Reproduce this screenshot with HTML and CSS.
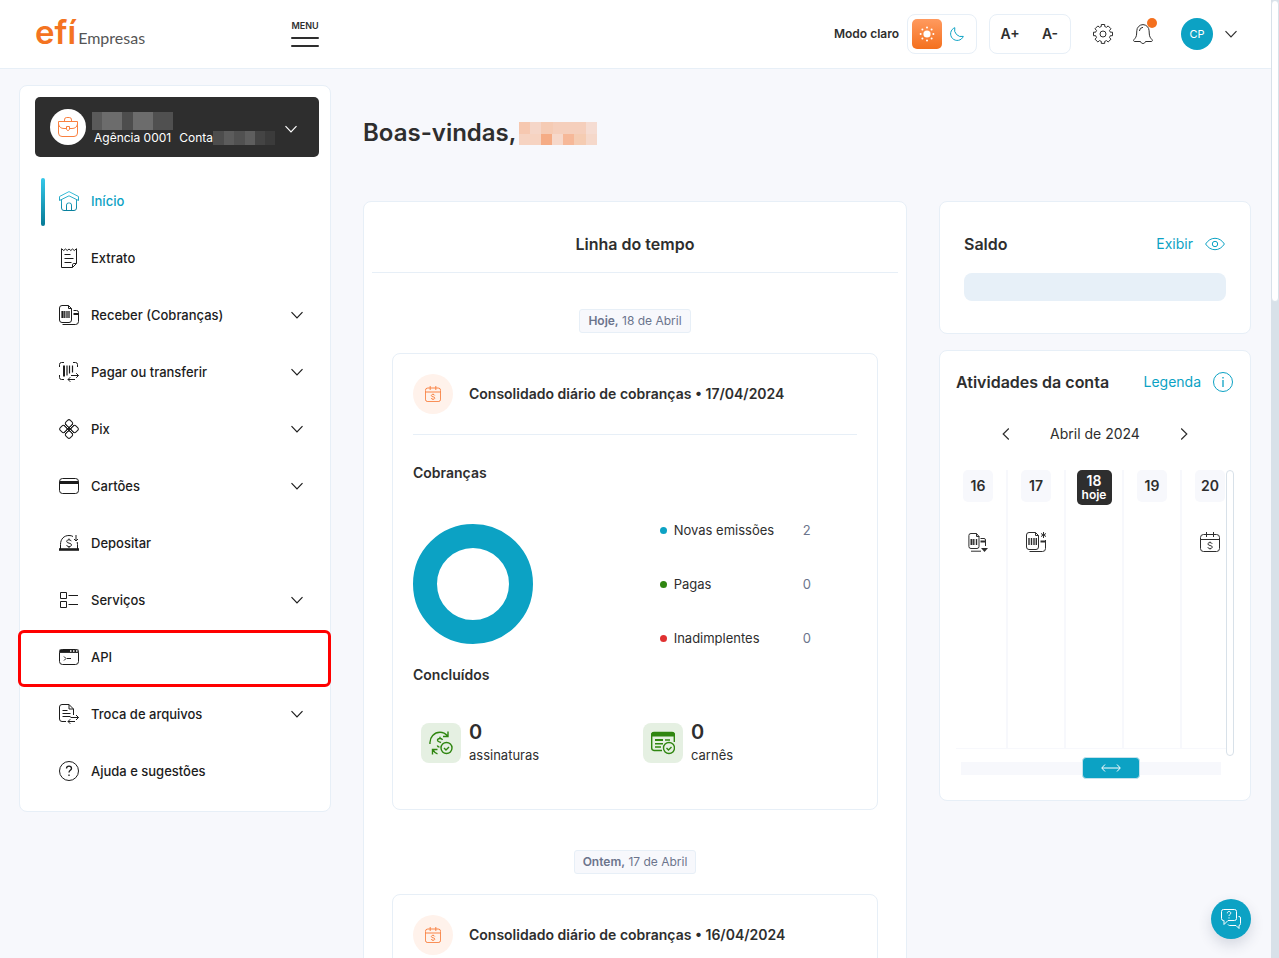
FILE: index.html
```html
<!DOCTYPE html>
<html lang="pt-BR">
<head>
<meta charset="utf-8">
<meta name="viewport" content="width=device-width, initial-scale=1">
<title>Efí Empresas</title>
<link rel="stylesheet" href="styles.css">
</head>
<body>
<svg class="defs" aria-hidden="true">
  <defs>
    <linearGradient id="teal" x1="0" y1="0" x2="0" y2="20" gradientUnits="userSpaceOnUse"><stop offset="0" stop-color="#3cc4e0"/><stop offset="1" stop-color="#077f9c"/></linearGradient>
    <symbol id="chev" viewBox="0 0 12 12"><path d="M.5 3.200L6 8.800l5.500-5.600"/></symbol>
    <symbol id="calendar" viewBox="0 0 20 20"><rect x=".5" y="2.500" width="19" height="17" rx="3"/><path d="M.5 7.500h19M6.500 0v5M13.500 0v5M12.200 11.800c-.3-.8-1.100-1.200-2.200-1.200-1.200 0-2.100.5-2.100 1.400 0 2 4.400 1 4.400 3 0 .9-.9 1.500-2.200 1.500-1.200 0-2.200-.5-2.400-1.400M10 9.600v1M10 16.500v1"/></symbol>
  </defs>
</svg>
<div class="app">
  <div class="page">
    <header class="topbar">
      <a class="logo" href="#"><span class="logo-name">efí</span><span class="logo-sub">Empresas</span></a>
      <button class="menu" type="button"><span>MENU</span><i></i><i></i></button>
      <div class="tools">
        <span class="mode-label">Modo claro</span>
        <div class="toggle">
          <button class="mode sun" type="button" aria-label="Modo claro">
            <svg width="16" height="16" viewBox="0 0 16 16"><circle cx="8" cy="8" r="3.600" fill="#fff"/><g fill="#fff"><circle cx="8" cy="1.600" r="1"/><circle cx="8" cy="14.400" r="1"/><circle cx="1.600" cy="8" r="1"/><circle cx="14.400" cy="8" r="1"/><circle cx="3.400" cy="3.400" r="1"/><circle cx="12.600" cy="12.600" r="1"/><circle cx="3.400" cy="12.600" r="1"/><circle cx="12.600" cy="3.400" r="1"/></g></svg>
          </button>
          <button class="mode" type="button" aria-label="Modo escuro">
            <svg width="14" height="14" viewBox="0 0 14 14" fill="none" stroke="#0ca2c4"><path d="M4.800.7A6.600 6.600 0 1 0 13.300 9.400 7 7 0 0 1 4.800.7z"/></svg>
          </button>
        </div>
        <div class="toggle zoom">
          <button class="size" type="button">A+</button>
          <button class="size" type="button">A-</button>
        </div>
        <button class="icon-btn gear" type="button" aria-label="Configurações">
          <svg class="ic" viewBox="0 0 20 20"><circle cx="10" cy="10" r="3"/><path d="M8.300.5h3.400v2l1.900.8 1.500-1.400 2.900 2.900-1.500 1.600.8 1.800h2.200v3.500h-2.200l-.8 1.900 1.500 1.600-2.900 2.800-1.500-1.400-1.900.8v2H8.300v-2l-1.900-.8L4.900 18 2 15.200l1.500-1.600-.8-1.900H.5V8.200h2.200l.8-1.800L2 4.800l2.900-2.900 1.500 1.400 1.900-.8z" stroke-linejoin="round"/></svg>
        </button>
        <button class="icon-btn bell" type="button" aria-label="Notificações">
          <svg class="ic" viewBox="0 0 20 20"><path d="M7.500 17.500c.4 1.200 1.200 2 2.500 2s2.100-.8 2.500-2h5.800c1 0 1.500-1 .8-1.800-1.700-1.800-2.600-3-2.800-5.700l-.2-3.200A6.300 6.300 0 0 0 10 .6a6.300 6.300 0 0 0-6.200 6.200L3.600 10c-.2 2.700-1 3.900-2.700 5.700-.8.800-.3 1.800.8 1.800zM6.400 7A4 4 0 0 1 10 3.300"/></svg>
          <i class="dot-new"></i>
        </button>
        <button class="profile" type="button"><span class="initials">CP</span><svg class="ic chev"><use href="#chev"/></svg></button>
      </div>
    </header>
    <div class="layout">
      <aside class="card sidebar">
        <button class="account" type="button">
          <span class="account-pic"><svg width="20" height="20" viewBox="0 0 20 20" fill="none" stroke="#f98040"><path d="M.5 4.500h19V16a3.500 3.500 0 0 1-3.500 3.500H4A3.500 3.500 0 0 1 .5 16zM6.500 4.500V3a2.300 2.300 0 0 1 2.300-2.500h2.400A2.300 2.300 0 0 1 13.500 3v1.500M.5 7c.5 3 2.500 4.500 5.500 4.500h2.500M19.500 7c-.5 3-2.500 4.500-5.500 4.500h-2.500"/><path d="M8.500 9.500h3v3L10 13.700l-1.500-1.200z"/></svg></span>
          <span class="account-info"><span class="mask mask-name"></span><span class="account-line"><span>Agência 0001</span><span>Conta<span class="mask mask-num"></span></span></span></span>
          <svg class="ic chev"><use href="#chev"/></svg>
        </button>
        <nav class="nav">
          <a class="item active" href="#"><svg class="ic" viewBox="0 0 20 20"><g stroke="url(#teal)"><path d="M.5 5.500L10 .6l9.500 4.900v4L10 4.800.5 9.500z" stroke-linejoin="round"/><path d="M2.500 9v8a2.500 2.500 0 0 0 2.500 2.500h10a2.500 2.500 0 0 0 2.500-2.500V9M7.500 19v-5a2 2 0 0 1 2-2h1a2 2 0 0 1 2 2v5"/></g></svg><span>Início</span></a>
          <a class="item" href="#"><svg class="ic" viewBox="0 0 20 20"><path d="M2.500.7v18.800h11l4-4V.7l-2.200 1.800L13.500 1l-1.700 1.500L10 1 8.200 2.500 6.500 1 4.700 2.500zM13.500 19.300v-2.500c0-.8.500-1.300 1.300-1.300h2.500M5.500 6.500h6M5.500 10.500h9M5.500 14.500h7"/></svg><span>Extrato</span></a>
          <a class="item" href="#"><svg class="ic" viewBox="0 0 20 20"><path d="M9.500.5H3A2.500 2.500 0 0 0 .5 3v12A2.500 2.500 0 0 0 3 17.500h7a2.500 2.500 0 0 0 2.500-2.500V3.500zM9.500.5v3h3M14.500 5.500h3a2 2 0 0 1 2 2v9a3 3 0 0 1-3 3H3.500"/><path d="M14.500 9h5.500M3.500 6v7" stroke-width="2.200"/><path d="M5.800 6v7M8 6v7M10 6v7" stroke-width="1.300"/></svg><span>Receber (Cobranças)</span><svg class="ic chev"><use href="#chev"/></svg></a>
          <a class="item" href="#"><svg class="ic" viewBox="0 0 20 20"><path d="M.5 5V2.500a2 2 0 0 1 2-2H5M14 .5h2.500a2 2 0 0 1 2 2V5M.5 13v2.500a2 2 0 0 0 2 2H5"/><path d="M5 3.500v11" stroke-width="2"/><path d="M8 3.500v10M10.500 3.500v8M13.500 3.500v7" stroke-width="1.200"/><path d="M12 13.500h7.500m-2.300-2.300l2.300 2.300-2.300 2.300M16 17.500H9m2.300-2.300L9 17.500l2.300 2.300"/></svg><span>Pagar ou transferir</span><svg class="ic chev"><use href="#chev"/></svg></a>
          <a class="item" href="#"><svg class="ic" viewBox="0 0 20 20"><rect x="6.900" y="1.200" width="6.200" height="6.200" rx="2" transform="rotate(45 10 4.300)"/><rect x="12.600" y="6.900" width="6.200" height="6.200" rx="2" transform="rotate(45 15.700 10)"/><rect x="6.900" y="12.600" width="6.200" height="6.200" rx="2" transform="rotate(45 10 15.700)"/><rect x="1.200" y="6.900" width="6.200" height="6.200" rx="2" transform="rotate(45 4.300 10)"/><path d="M6 5l9 9M5 6l9 9M14 5l-9 9M15 6l-9 9"/></svg><span>Pix</span><svg class="ic chev"><use href="#chev"/></svg></a>
          <a class="item" href="#"><svg class="ic" viewBox="0 0 20 20"><rect x=".5" y="2.500" width="19" height="15" rx="3"/><path d="M.5 6.500h19" stroke-width="3"/></svg><span>Cartões</span><svg class="ic chev"><use href="#chev"/></svg></a>
          <a class="item" href="#"><svg class="ic" viewBox="0 0 20 20"><path d="M1.500 16V11.500C1.500 6 5 2.500 10 2.500c1.600 0 3 .3 4 1M18.500 16v-4.500c0-.9-.1-1.700-.3-2.500M17 2v6m-2-2l2 2 2-2M12.300 8.200c-.3-.9-1.200-1.400-2.300-1.400-1.300 0-2.300.6-2.300 1.600 0 2.300 4.800 1.200 4.800 3.500 0 1-1 1.700-2.400 1.700-1.300 0-2.300-.6-2.500-1.600M10 5.500v1.300M10 13.600V15"/><path d="M0 16.500h20" stroke-width="2.600"/></svg><span>Depositar</span></a>
          <a class="item" href="#"><svg class="ic" viewBox="0 0 20 20"><path d="M1.500 2.500h6v6h-6zM1.500 11.500h6v6h-6zM9.500 5.500H19M9.500 14.500H19"/></svg><span>Serviços</span><svg class="ic chev"><use href="#chev"/></svg></a>
          <a class="item marked" href="#"><svg class="ic" viewBox="0 0 20 20"><rect x=".5" y="2.500" width="19" height="15" rx="3"/><path d="M.5 4.200h19" stroke-width="3.400"/><path d="M11 4h1.500M14 4h1.500M17 4h1.500" stroke="#fff" stroke-width="1.500"/><path d="M5 9.500l2 2-2 2M8 11.500h4"/></svg><span>API</span></a>
          <a class="item" href="#"><svg class="ic" viewBox="0 0 20 20"><path d="M10 .5H3A2.500 2.500 0 0 0 .5 3v12A2.500 2.500 0 0 0 3 17.500h4M10 .5l4.500 4.500v6M10 .5V5h4.500M3.500 6.500h5M3.500 9.500h8M3.500 12.500h8M11.500 13.500h8m-2.500-2.500l2.500 2.500-2.500 2.500M16 17.500H9m2.300-2.300L9 17.500l2.300 2.300"/></svg><span>Troca de arquivos</span><svg class="ic chev"><use href="#chev"/></svg></a>
          <a class="item" href="#"><svg class="ic" viewBox="0 0 20 20"><circle cx="10" cy="10" r="9.500"/><path d="M7.500 7.500c0-1.400 1-2.300 2.500-2.300s2.500.9 2.500 2.200c0 1.800-2.500 1.900-2.500 4M10 13.500V15" stroke-width="1.300"/></svg><span>Ajuda e sugestões</span></a>
        </nav>
      </aside>
      <main class="content">
        <h1 class="welcome">Boas-vindas,<span class="mask mask-user"></span></h1>
        <div class="columns">
          <section class="card timeline">
            <h2 class="timeline-title">Linha do tempo</h2>
            <div class="feed">
              <div class="entry">
                <p class="pill"><b>Hoje,</b> 18 de Abril</p>
                <article class="card event">
                  <div class="event-head"><span class="event-icon"><svg width="16" height="16"><use href="#calendar"/></svg></span><h3>Consolidado diário de cobranças • 17/04/2024</h3></div>
                  <h4 class="charges">Cobranças</h4>
                  <div class="chart">
                    <svg class="donut" viewBox="0 0 120 120"><circle cx="60" cy="60" r="48" fill="none" stroke="#0ca2c4" stroke-width="24"/></svg>
                    <dl class="legend">
                      <div><dt class="blue">Novas emissões</dt><dd>2</dd></div>
                      <div><dt class="green">Pagas</dt><dd>0</dd></div>
                      <div><dt class="red">Inadimplentes</dt><dd>0</dd></div>
                    </dl>
                  </div>
                  <h4 class="done">Concluídos</h4>
                  <div class="stats">
                    <div class="stat"><span class="stat-icon"><svg width="24" height="24" viewBox="0 0 24 24"><path d="M1 13C.3 6 5.500 1.300 11 1.300c3 0 5.500 1.300 7.500 3.700M19 .5V5.500h-5M8.500 22.800c-2-.6-3.500-1.800-4.500-4M3.500 23.500v-5h5M13.500 9c-.3-1-1.300-1.500-2.500-1.500-1.400 0-2.500.7-2.500 1.800C8.500 11 11 11 12 11.500M8.300 14.500c.3 1 1.200 1.500 2.200 1.600M11 5.800v1.700"/><circle cx="17.500" cy="17" r="5.500"/><path d="M15 17l2 2 3-3"/></svg></span><span class="stat-text"><strong>0</strong><span>assinaturas</span></span></div>
                    <div class="stat"><span class="stat-icon"><svg width="24" height="24" viewBox="0 0 24 24"><path d="M11 19.500H3A2.500 2.500 0 0 1 .7 17V4A2.500 2.500 0 0 1 3 1.500h18A2.500 2.500 0 0 1 23.300 4v7"/><path d="M0 5.500V4a3 3 0 0 1 3-3h18a3 3 0 0 1 3 3v1.500z" fill="#2f8610" stroke="none"/><path d="M4 9h8" stroke-width="2"/><path d="M14 9h5M4 12.800h8M4 16h6"/><circle cx="18" cy="17" r="5.500"/><path d="M15.500 17l2 2 3-3"/></svg></span><span class="stat-text"><strong>0</strong><span>carnês</span></span></div>
                  </div>
                </article>
              </div>
              <div class="entry">
                <p class="pill"><b>Ontem,</b> 17 de Abril</p>
                <article class="card event">
                  <div class="event-head"><span class="event-icon"><svg width="16" height="16"><use href="#calendar"/></svg></span><h3>Consolidado diário de cobranças • 16/04/2024</h3></div>
                </article>
              </div>
            </div>
          </section>
          <div class="side">
            <section class="card balance">
              <div class="side-head"><h2>Saldo</h2><button class="link" type="button">Exibir<svg width="20" height="20" viewBox="0 0 20 20"><path d="M.6 10C3 6.300 6.200 4.300 10 4.300s7 2 9.400 5.700c-2.400 3.700-5.600 5.700-9.400 5.700S3 13.700.6 10z"/><circle cx="10" cy="10" r="2.700"/></svg></button></div>
              <div class="balance-bar"></div>
            </section>
            <section class="card activity">
              <div class="side-head"><h2>Atividades da conta</h2><button class="link" type="button">Legenda<svg width="20" height="20" viewBox="0 0 20 20"><circle cx="10" cy="10" r="9.500"/><path d="M10 8v7M10 5v1.500" stroke-width="1.300"/></svg></button></div>
              <div class="month"><button class="icon-btn" type="button" aria-label="Mês anterior"><svg class="ic prev" width="12" height="12"><use href="#chev"/></svg></button><span>Abril de 2024</span><button class="icon-btn" type="button" aria-label="Próximo mês"><svg class="ic next" width="12" height="12"><use href="#chev"/></svg></button></div>
              <div class="calendar">
                <div class="view">
                  <ol class="days">
                    <li><span class="day">16</span><svg class="ic" viewBox="0 0 20 20"><path d="M8.500 1.500H3A2 2 0 0 0 .9 3.500v11A2 2 0 0 0 3 16.500h6a2 2 0 0 0 2-2V4.500zM8.500 1.500v3h2.800M12.500 6.500h3.500a1.500 1.500 0 0 1 1.500 1.500v6M3 19.200h10"/><path d="M12.500 9.500h5M3.500 7v6" stroke-width="2"/><path d="M5.800 7v6M8.500 7v6" stroke-width="1.400"/><path d="M13 16h7l-3.500 4z" fill="#2e2e2e" stroke="none"/></svg></li>
                    <li><span class="day">17</span><svg class="ic" viewBox="0 0 20 20"><path d="M9.500.5H3A2.500 2.500 0 0 0 .5 3v12A2.500 2.500 0 0 0 3 17.500h7a2.500 2.500 0 0 0 2.500-2.500V3.500zM9.500.5v3h3M19.500 8v8.500a3 3 0 0 1-3 3H3.500M17.500 0v6M15 1.500l5 3M20 1.500l-5 3"/><path d="M14.500 9.500h5.500" stroke-width="2"/><path d="M3 6v7M5.500 6v7M8 6v7M10.300 6v7" stroke-width="1.400"/></svg></li>
                    <li><span class="day today">18<small>hoje</small></span></li>
                    <li><span class="day">19</span></li>
                    <li><span class="day">20</span><svg class="ic"><use href="#calendar"/></svg></li>
                  </ol>
                </div>
                <div class="rail"></div>
              </div>
              <input class="range" type="range" min="0" max="100" value="60" aria-label="Dias do mês">
            </section>
          </div>
        </div>
      </main>
    </div>
  </div>
  <div class="scroll"><div class="scroll-thumb"></div></div>
</div>
<button class="chat" type="button" aria-label="Ajuda"><svg width="20" height="20" viewBox="0 0 20 20"><path d="M2.500.5h11a2 2 0 0 1 2 2v7a2 2 0 0 1-2 2H7l-4 4v-4h-.5a2 2 0 0 1-2-2v-7a2 2 0 0 1 2-2zM17.500 7.500h.5a1.500 1.500 0 0 1 1.500 1.500v5.500a2 2 0 0 1-1.500 2v3l-3-3H8.500a2 2 0 0 1-1.500-1"/><path d="M6.300 4.300C6.300 3 7 2.500 8 2.500s1.800.6 1.800 1.600C9.800 5.300 8 5.500 8 7M8 8.300v1.200"/></svg></button>
</body>
</html>
```
FILE: styles.css
```css
:root {
  --ink: #2e2e2e;
  --line: #e7eff7;
  --ground: #f7f8fc;
  --teal: #0ca2c4;
  --slate: #6b748c;
}
* { box-sizing: border-box; }
body {
  margin: 0;
  background: var(--ground);
  color: var(--ink);
  font: 13px/24px Inter, "Open Sans", sans-serif;
}
h1, h2, h3, h4, p, ol, dl, dd { margin: 0; padding: 0; }
button { border: 0; padding: 0; background: none; color: inherit; font: inherit; cursor: pointer; }
a { color: inherit; text-decoration: none; }
svg { display: block; flex: none; }
.defs { position: absolute; width: 0; height: 0; }
.ic { width: 20px; height: 20px; fill: none; stroke: currentColor; }
.ic.chev, .ic.prev, .ic.next { width: 12px; height: 12px; stroke-width: 1.2; }
.prev { transform: rotate(90deg); }
.next { transform: rotate(-90deg); }
.card { background: #fff; border: 1px solid var(--line); border-radius: 8px; }
.mask { display: inline-block; }

.app { display: flex; height: 100vh; overflow: hidden; }
.page { flex: 1; min-width: 0; }
.scroll { width: 8px; background: #d8e1e9; }
.scroll-thumb { height: 302px; background: #fff; border: 1px solid #d8e1e9; border-radius: 4px; }

.topbar { display: flex; align-items: center; height: 69px; padding: 0 34px 0 35px; background: #fff; border-bottom: 1px solid var(--line); }
.logo { display: flex; align-items: baseline; gap: 2px; width: 256px; padding-bottom: 4px; }
.logo-name { color: #f47321; font-size: 33px; font-weight: 600; line-height: 40px; }
.logo-sub { color: #555; font: 400 16px/24px Lato, sans-serif; }
.menu { display: grid; gap: 6px; width: 28px; padding-bottom: 2px; font-size: 9px; font-weight: 600; line-height: 11px; justify-items: center; }
.menu i { width: 28px; height: 2px; background: var(--ink); border-radius: 1px; }
.tools { display: flex; align-items: center; margin-left: auto; }
.mode-label { margin-right: 8px; font-size: 12px; font-weight: 600; }
.toggle { display: flex; align-items: center; width: 70px; height: 40px; padding: 0 4px; border: 1px solid var(--line); border-radius: 8px; }
.mode { display: grid; place-items: center; width: 30px; height: 30px; border-radius: 5px; }
.mode.sun { background: linear-gradient(#ff9a5f, #f4701e); }
.zoom { width: 82px; margin: 0 22px 0 12px; padding: 0; }
.size { flex: 1; font-size: 14px; font-weight: 600; }
.icon-btn { display: block; }
.gear { margin-right: 20px; }
.bell { position: relative; margin-right: 28px; }
.dot-new { position: absolute; top: -6px; right: -4px; width: 10px; height: 10px; border-radius: 50%; background: #f4701e; }
.profile { display: flex; align-items: center; gap: 12px; }
.initials { width: 32px; border-radius: 50%; background: var(--teal); color: #fff; font-size: 11px; line-height: 32px; text-align: center; }

.layout { display: flex; align-items: flex-start; gap: 32px; padding: 16px 20px 0 19px; }
.sidebar { flex: none; width: 312px; padding: 11px 0 10px; }
.account { display: flex; align-items: center; width: 284px; height: 60px; margin: 0 15px 17px; padding: 0 22px 0 15px; border-radius: 5px; background: var(--ink); color: #fff; text-align: left; }
.account .chev { margin-top: 4px; }
.account-pic { display: grid; place-items: center; width: 36px; height: 36px; margin-right: 6px; border-radius: 50%; background: #fff; }
.account-info { flex: 1; display: grid; gap: 1px; padding-top: 2px; }
.mask-name { width: 81px; height: 18px; background: linear-gradient(90deg, #5a5a5a 12%, #6c6c6c 12% 37%, #4d4d4d 37% 50%, #6c6c6c 50% 75%, #505050 75%); }
.account-line { display: flex; gap: 8px; padding-left: 2px; font-size: 12px; line-height: 14px; white-space: nowrap; }
.mask-num { width: 62px; height: 14px; vertical-align: top; background: linear-gradient(90deg, #4d4d4d 17%, #5c5c5c 17% 34%, #515151 34% 51%, #5e5e5e 51% 67%, #444 67% 84%, #3b3b3b 84%); }
.item { position: relative; display: flex; align-items: center; gap: 12px; height: 57px; padding: 0 27px 3px 39px; color: #1c1c1c; font-weight: 500; }
.item .chev { margin-left: auto; }
.item.active { color: var(--teal); }
.active::before { content: ""; position: absolute; left: 21px; top: 4px; width: 4px; height: 48px; border-radius: 2px; background: linear-gradient(#35c8ea, #067a96); }
.marked::after { content: ""; position: absolute; inset: 0 -1px 0 -2px; border: 3px solid #f00; border-radius: 6px; }

.content { flex: 1; min-width: 0; }
.welcome { display: flex; align-items: center; gap: 3px; padding: 32px 0 52px; font-size: 24px; font-weight: 600; line-height: 32px; }
.mask-user { width: 78px; height: 23px; background: linear-gradient(90deg, #f6d3c1 28%, #f5ac85 28% 42%, #f6d8ca 42% 57%, #f6b898 57% 71%, #f5ccb2 71% 86%, #f5d8ca 86%) 0 100% / 100% 11px no-repeat, linear-gradient(90deg, #f6c8b0 14%, #f5d6c8 14% 28%, #f5cbb4 28% 43%, #f5cfbc 43% 86%, #f5dcd2 86%); }
.columns { display: flex; align-items: flex-start; gap: 32px; }
.timeline { flex: 1; min-width: 0; padding: 0 8px; }
.timeline-title { padding: 30px 0 16px; border-bottom: 1px solid var(--line); font-size: 16px; font-weight: 600; text-align: center; }
.feed { display: grid; gap: 40px; padding: 36px 20px; }
.entry { display: grid; justify-items: center; gap: 20px; }
.pill { padding: 0 8px; border: 1px solid var(--line); border-radius: 3px; background: var(--ground); color: var(--slate); font-size: 12px; line-height: 22px; }
.pill b { font-weight: 600; }
.event { width: 100%; padding: 20px 20px 46px; }
.event-head { display: flex; align-items: center; gap: 16px; padding-bottom: 20px; border-bottom: 1px solid var(--line); }
.event-icon { display: grid; place-items: center; width: 40px; height: 40px; border-radius: 50%; background: #fff2eb; }
.event-icon svg { fill: none; stroke: #f98040; stroke-width: 1.2; }
h3, h4 { font-size: 14px; font-weight: 600; line-height: 24px; }
.charges { margin-top: 26px; }
.chart { display: grid; grid-template-columns: 5fr 4fr; align-items: center; margin-top: 33px; }
.donut { width: 120px; height: 120px; }
.legend { display: grid; gap: 30px; }
.legend div { display: flex; }
.legend dt { display: flex; align-items: center; gap: 7px; width: 143px; }
.legend dt::before { content: ""; width: 7px; height: 7px; border-radius: 50%; background: currentColor; }
.legend dt.blue::before { background: var(--teal); }
.legend dt.green::before { background: #2f8610; }
.legend dt.red::before { background: #e03131; }
.legend dd { color: var(--slate); }
.done { margin-top: 13px; }
.stats { display: grid; grid-template-columns: 1fr 1fr; margin-top: 36px; }
.stat { display: flex; gap: 8px; height: 40px; padding-left: 8px; }
.stat-icon { display: grid; place-items: center; width: 40px; height: 40px; border-radius: 8px; background: #e5f0e2; }
.stat-icon svg { fill: none; stroke: #2f8610; stroke-width: 1.4; }
.stat-text { display: grid; grid-template-rows: 20px 24px; }
.stat-text strong { font-size: 20px; font-weight: 600; line-height: 18px; }

.side { display: grid; grid-template-columns: minmax(0, 1fr); gap: 16px; width: 312px; flex: none; }
.side-head { display: flex; align-items: center; justify-content: space-between; height: 24px; }
.side-head h2 { font-size: 16px; font-weight: 600; }
.link { display: flex; align-items: center; gap: 12px; padding-right: 1px; color: var(--teal); }
.link, .month { font-size: 14px; }
.link svg { fill: none; stroke: currentColor; }
.balance { padding: 30px 24px 32px; }
.balance-bar { height: 28px; margin-top: 17px; border-radius: 8px; background: #e7f0f8; }
.activity { padding: 19px 16px 21px; }
.month { display: flex; justify-content: space-between; align-items: center; padding: 0 44px; margin-top: 28px; }
.calendar { display: flex; align-items: flex-start; margin-top: 24px; }
.view { flex: 1; min-width: 0; overflow: hidden; height: 279px; border-bottom: 1px solid var(--ground); }
.days { display: flex; margin-left: -6px; list-style: none; height: 100%; }
.days li { display: grid; grid-template-rows: 35px 20px; gap: 27px; justify-items: center; width: 58px; flex: none; border-right: 2px solid var(--ground); }
.day { display: grid; place-content: center; justify-items: center; width: 30px; height: 32px; border-radius: 5px; background: var(--ground); font-size: 14px; font-weight: 600; line-height: 16px; }
.today { width: 35px; height: 35px; background: var(--ink); color: #fff; line-height: 14px; }
.today small { font-size: 12px; line-height: 13px; }
.rail { width: 8px; height: 286px; border: 1px solid #d8e1e9; border-radius: 4px; }
.range { display: block; appearance: none; width: calc(100% - 18px); height: 22px; margin: 1px 0 0 5px; background: linear-gradient(var(--ground), var(--ground)) 0 50% / 100% 13px no-repeat; }
.range::-webkit-slider-thumb { appearance: none; width: 58px; height: 22px; border: 1px solid #c4e2ec; border-radius: 4px; background: var(--teal) url("data:image/svg+xml,%3Csvg xmlns='http://www.w3.org/2000/svg' width='20' height='8' fill='none' stroke='white'%3E%3Cpath d='M1 4h18M4 .5L.7 4 4 7.500M16 .5L19.300 4 16 7.500'/%3E%3C/svg%3E") center no-repeat; }

.chat { position: fixed; right: 28px; bottom: 19px; display: grid; place-items: center; width: 40px; height: 40px; border-radius: 50%; background: var(--teal); box-shadow: 0 6px 14px rgba(40, 50, 80, .16); }
.chat svg { fill: none; stroke: #fff; }
```
